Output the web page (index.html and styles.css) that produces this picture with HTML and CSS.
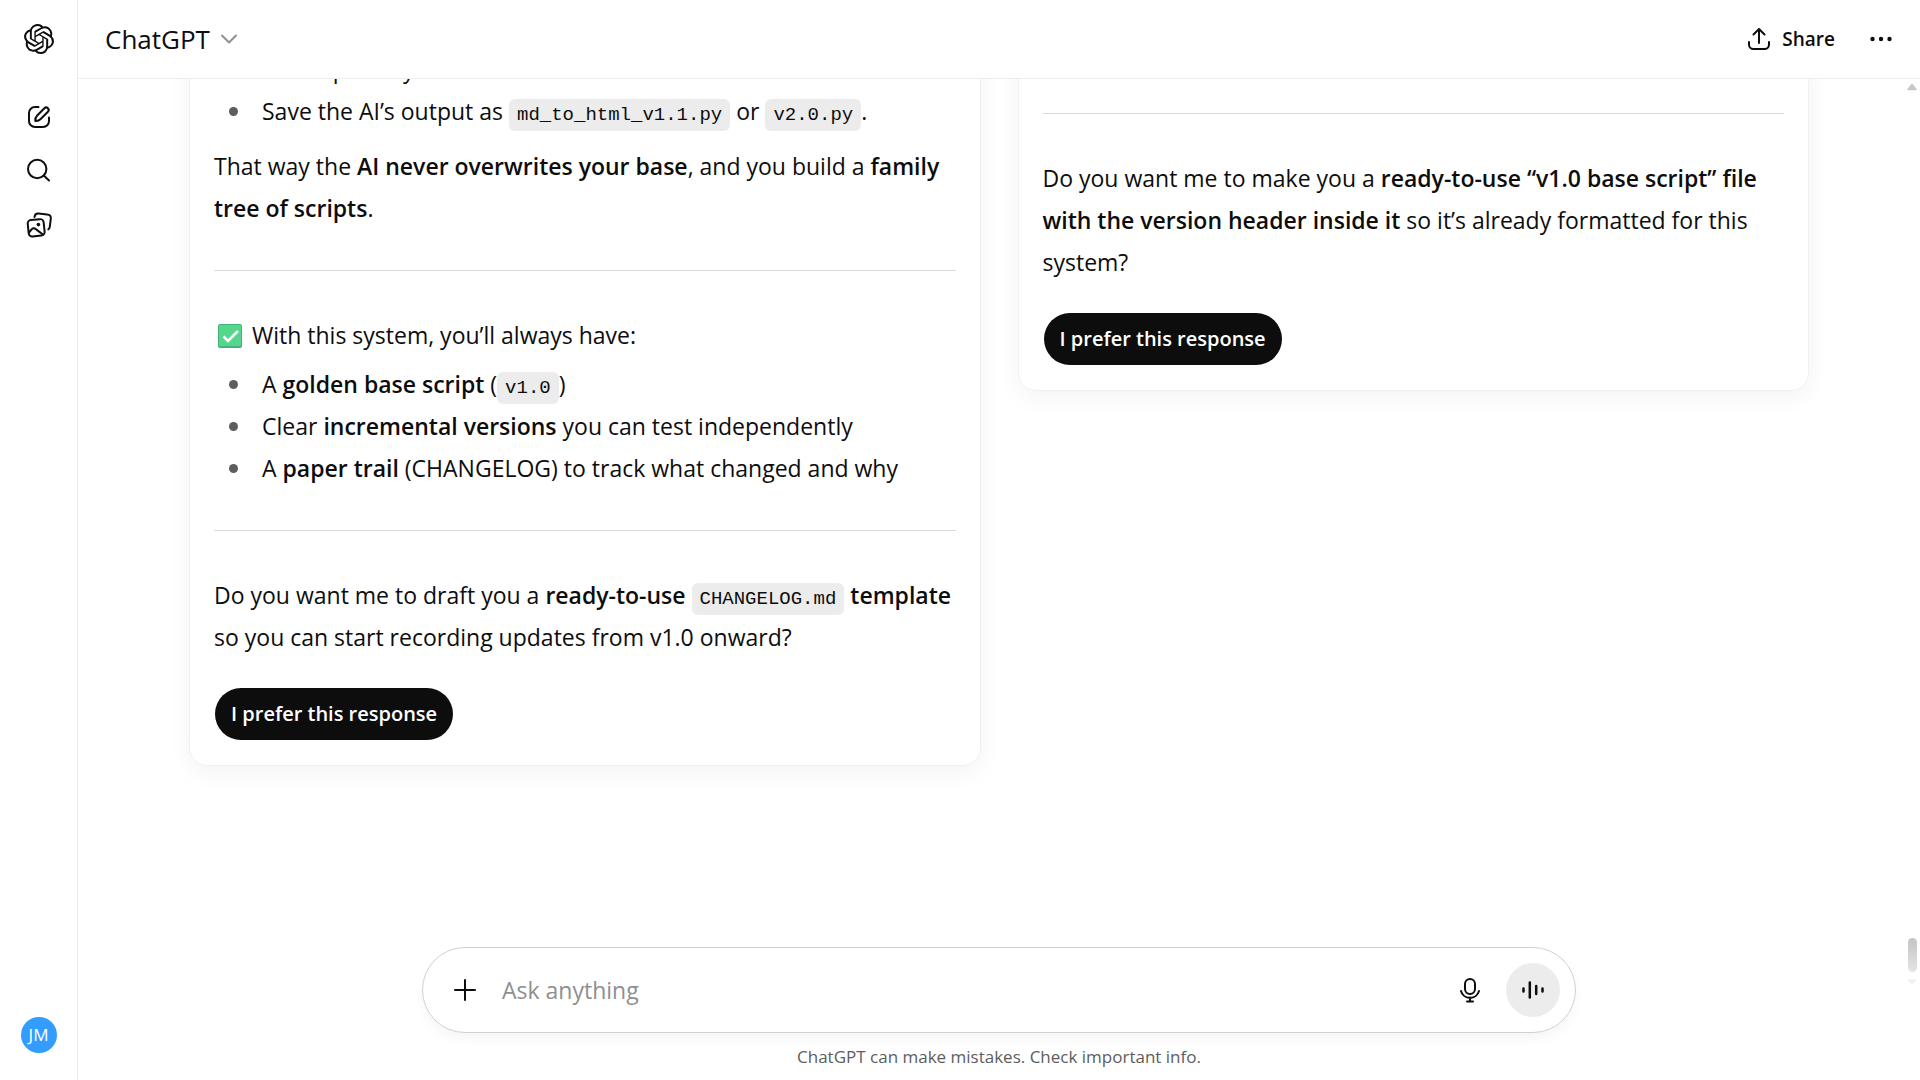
FILE: index.html
```html
<!DOCTYPE html>
<html lang="en">
<head>
<meta charset="utf-8">
<title>ChatGPT</title>
<meta name="viewport" content="width=device-width, initial-scale=1">
<link rel="stylesheet" href="styles.css">
</head>
<body>
<div class="app">
  <nav class="rail" aria-label="Sidebar">
    <a class="rail-logo" href="#" aria-label="Home">
      <svg width="30" height="30" viewBox="0 0 24 24" fill="currentColor"><path d="M22.2819 9.8211a5.9847 5.9847 0 0 0-.5157-4.9108 6.0462 6.0462 0 0 0-6.5098-2.9A6.0651 6.0651 0 0 0 4.9807 4.1818a5.9847 5.9847 0 0 0-3.9977 2.9 6.0462 6.0462 0 0 0 .7427 7.0966 5.98 5.98 0 0 0 .511 4.9107 6.051 6.051 0 0 0 6.5146 2.9001A5.9847 5.9847 0 0 0 13.2599 24a6.0557 6.0557 0 0 0 5.7718-4.2058 5.9894 5.9894 0 0 0 3.9977-2.9001 6.0557 6.0557 0 0 0-.7475-7.0729zm-9.022 12.6081a4.4755 4.4755 0 0 1-2.8764-1.0408l.1419-.0804 4.7783-2.7582a.7948.7948 0 0 0 .3927-.6813v-6.7369l2.02 1.1686a.071.071 0 0 1 .038.052v5.5826a4.504 4.504 0 0 1-4.4945 4.4944zm-9.6607-4.1254a4.4708 4.4708 0 0 1-.5346-3.0137l.142.0852 4.783 2.7582a.7712.7712 0 0 0 .7806 0l5.8428-3.3685v2.3324a.0804.0804 0 0 1-.0332.0615L9.74 19.9502a4.4992 4.4992 0 0 1-6.1408-1.6464zM2.3408 7.8956a4.485 4.485 0 0 1 2.3655-1.9728V11.6a.7664.7664 0 0 0 .3879.6765l5.8144 3.3543-2.0201 1.1685a.0757.0757 0 0 1-.071 0l-4.8303-2.7865A4.504 4.504 0 0 1 2.3408 7.872zm16.5963 3.8558L13.1038 8.364 15.1192 7.2a.0757.0757 0 0 1 .071 0l4.8303 2.7913a4.4944 4.4944 0 0 1-.6765 8.1042v-5.6772a.79.79 0 0 0-.407-.667zm2.0107-3.0231l-.142-.0852-4.7735-2.7818a.7759.7759 0 0 0-.7854 0L9.409 9.2297V6.8974a.0662.0662 0 0 1 .0284-.0615l4.8303-2.7866a4.4992 4.4992 0 0 1 6.6802 4.66zM8.3065 12.863l-2.02-1.1638a.0804.0804 0 0 1-.038-.0567V6.0742a4.4992 4.4992 0 0 1 7.3757-3.4537l-.142.0805L8.704 5.459a.7948.7948 0 0 0-.3927.6813zm1.0976-2.3654l2.602-1.4998 2.6069 1.4998v2.9994l-2.5974 1.4997-2.6067-1.4997Z"/></svg>
    </a>
    <div class="rail-actions">
      <button class="icon-button" aria-label="New chat">
        <svg class="line" width="30" height="30" viewBox="0 0 30 30"><path d="M14.5 5H11a6 6 0 0 0-6 6v8a6 6 0 0 0 6 6h8a6 6 0 0 0 6-6v-3.500"/><path d="M11.300 18.900c-.2-2.400.5-4 1.900-5.400l7.200-7.200a2.450 2.450 0 0 1 3.500 3.500l-7.200 7.200c-1.400 1.400-3 2.100-5.400 1.900z"/></svg>
      </button>
      <button class="icon-button" aria-label="Search chats">
        <svg class="line" width="30" height="30" viewBox="0 0 30 30"><circle cx="13.200" cy="13" r="9.200"/><path d="M19.800 19.500l5.200 5"/></svg>
      </button>
      <button class="icon-button" aria-label="Library">
        <svg class="line" width="30" height="30" viewBox="0 0 30 30"><rect x="4.200" y="9.600" width="16" height="16.400" rx="3.500" transform="rotate(-6 12 18)"/><path d="M10.500 7c.3-2.500 1.600-3.600 4-3.400l8.600.8c2.800.2 4 1.700 3.700 4.300l-1 8c-.2 1.600-.7 2.300-1.500 2.700"/><path d="M5 22.500l2.800-3.400c1.200-1.300 2.600-1.300 4 0l6.800 5.200"/><circle class="dot" cx="14.400" cy="14.600" r="1.800"/></svg>
      </button>
    </div>
    <button class="avatar" aria-label="Account">JM</button>
  </nav>

  <main class="main">
    <header class="topbar">
      <button class="model">ChatGPT
        <svg width="18" height="18" viewBox="0 0 18 18"><path d="M2 5.500l7 7 7-7"/></svg>
      </button>
      <div class="topbar-actions">
        <button class="share">
          <svg class="line" width="24" height="24" viewBox="0 0 24 24"><path d="M2 15v2.500a4.500 4.500 0 0 0 4.500 4.500h11a4.500 4.500 0 0 0 4.500-4.500V15"/><path d="M12 16V2.500M6.500 7.500L12 2l5.500 5.500"/></svg>
          Share
        </button>
        <button class="more" aria-label="More options">
          <svg width="24" height="24" viewBox="0 0 24 24" fill="currentColor"><circle cx="3.500" cy="12" r="2.200"/><circle cx="12" cy="12" r="2.200"/><circle cx="20.500" cy="12" r="2.200"/></svg>
        </button>
      </div>
    </header>

    <section class="thread">
      <article class="card card-left">
        <ul>
          <li>Back up safely</li>
          <li>Save the AI’s output as <code>md_to_html_v1.1.py</code> or <code>v2.0.py</code>.</li>
        </ul>
        <p>That way the <strong>AI never overwrites your base</strong>, and you build a <strong>family tree of scripts</strong>.</p>
        <hr>
        <p class="lead"><svg class="check" width="32" height="24" viewBox="0 0 32 24" role="img" aria-label="Done"><rect x="4" width="24" height="24" rx="2" fill="#3fb57c"/><rect x="5" y="1" width="22" height="21" rx="1" fill="#56d68d"/><path d="M9.500 12.500l4.500 4.500 10-10" fill="none" stroke="#fff" stroke-width="2.600"/></svg> With this system, you’ll always have:</p>
        <ul>
          <li>A <strong>golden base script</strong> (<code>v1.0</code>)</li>
          <li>Clear <strong>incremental versions</strong> you can test independently</li>
          <li>A <strong>paper trail</strong> (CHANGELOG) to track what changed and why</li>
        </ul>
        <hr>
        <p>Do you want me to draft you a <strong>ready-to-use <code>CHANGELOG.md</code> template</strong> so you can start recording updates from v1.0 onward?</p>
        <button class="prefer">I prefer this response</button>
      </article>
      <article class="card card-right">
        <hr>
        <p>Do you want me to make you a <strong>ready-to-use “v1.0 base script” file with the version header inside it</strong> so it’s already formatted for this system?</p>
        <button class="prefer">I prefer this response</button>
      </article>
    </section>

    <footer class="footer">
      <form class="composer">
        <button type="button" class="icon-button" aria-label="Add files">
          <svg class="line" width="30" height="30" viewBox="0 0 30 30"><path d="M15 5v20M5 15h20"/></svg>
        </button>
        <input type="text" aria-label="Message" placeholder="Ask anything">
        <button type="button" class="icon-button" aria-label="Dictate">
          <svg class="line" width="30" height="30" viewBox="0 0 30 30"><rect x="11" y="4" width="10" height="15" rx="5"/><path d="M7 16a9.300 9.300 0 0 0 18 0M16 22.500v4M13 26.500h6"/></svg>
        </button>
        <button type="button" class="voice" aria-label="Voice mode">
          <svg class="bars" width="26" height="26" viewBox="0 0 26 26"><path d="M3.500 11.500v3M9.800 5.500v15M16.200 9v8M22.500 11.500v3"/></svg>
        </button>
      </form>
      <p class="notice">ChatGPT can make mistakes. Check important info.</p>
    </footer>

    <div class="scrollbar" aria-hidden="true">
      <svg width="10" height="8" viewBox="0 0 10 8"><path d="M5 1.500L9 6.500H1z" fill="#c8c8c8" stroke="#c8c8c8" stroke-width="1.500" stroke-linejoin="round"/></svg>
      <span class="thumb"></span>
      <svg width="10" height="8" viewBox="0 0 10 8"><path d="M0 1h10L5 7z" fill="#f3f3f3"/></svg>
    </div>
  </main>
</div>
</body>
</html>
```
FILE: styles.css
```css
* { box-sizing: border-box; }

body {
  margin: 0;
  background: #fff;
  color: #0d0d0d;
  font-family: "Open Sans", "Noto Sans", sans-serif;
  font-size: 23px;
  line-height: 42px;
}

button {
  border: 0;
  padding: 0;
  background: none;
  color: inherit;
  font: inherit;
  display: flex;
  align-items: center;
  justify-content: center;
}

svg { flex: none; }

.line {
  fill: none;
  stroke: currentColor;
  stroke-width: 2;
  stroke-linecap: round;
  stroke-linejoin: round;
}

.line .dot { fill: currentColor; stroke: none; }

.app {
  display: flex;
  height: 100vh;
}

.rail {
  display: flex;
  flex-direction: column;
  align-items: center;
  flex: none;
  width: 78px;
  padding: 24px 0 27px;
  border-right: 1px solid #ededed;
}

.rail-logo {
  display: flex;
  color: inherit;
}

.rail-actions {
  display: flex;
  flex-direction: column;
  gap: 24px;
  margin-top: 48px;
}

.icon-button { width: 30px; height: 30px; flex: none; }

.avatar {
  width: 36px;
  height: 36px;
  margin-top: auto;
  border-radius: 50%;
  background: #339cff;
  color: #fff;
  font-size: 17px;
}

.main {
  position: relative;
  display: flex;
  flex-direction: column;
  flex: 1;
  min-width: 0;
}

.topbar {
  display: flex;
  align-items: center;
  justify-content: space-between;
  flex: none;
  height: 79px;
  padding: 0 27px;
  border-bottom: 1px solid #ededed;
}

.model {
  gap: 10px;
  font-size: 26px;
}

.model path {
  fill: none;
  stroke: #8f8f8f;
  stroke-width: 2;
  stroke-linecap: round;
  stroke-linejoin: round;
}

.topbar-actions {
  display: flex;
  align-items: center;
  gap: 34px;
}

.share {
  gap: 11px;
  font-size: 19px;
  font-weight: 600;
}

.thread {
  display: flex;
  align-items: flex-start;
  gap: 37px;
  flex: 1;
  min-height: 0;
  padding: 0 111px;
  overflow: hidden;
}

.card {
  flex: 1;
  min-width: 0;
  padding: 24px 24px 25px;
  border: 1px solid #f0f0f0;
  border-radius: 18px;
  box-shadow: 0 6px 24px rgba(0, 0, 0, 0.05);
}

/* The thread is scrolled, so the start of each answer is above the fold. */
.card-left { margin-top: -56px; }
.card-right { margin-top: -32px; }

.card p { margin: 0; }
.card .lead { margin-bottom: 7px; }

.card ul {
  margin: 0;
  padding-left: 48px;
  list-style: none;
}

.card li { position: relative; }

.card li::before {
  content: "";
  position: absolute;
  top: 17px;
  left: -33px;
  width: 9px;
  height: 9px;
  border-radius: 50%;
  background: #5d5d5d;
}

.card ul + p { margin-top: 13px; }

.card hr {
  margin: 41px 0 43px;
  border: 0;
  border-top: 1px solid #d9d9d9;
}

.card strong { font-weight: 600; }

.card code {
  padding: 5px 8px;
  border-radius: 6px;
  background: #ececec;
  font-family: "Liberation Mono", monospace;
  font-size: 19px;
  font-weight: 400;
  line-height: 24px;
}

.check { vertical-align: -4px; }

.prefer {
  height: 52px;
  margin-top: 30px;
  margin-left: 1px;
  padding: 0 16px;
  border-radius: 26px;
  background: #0d0d0d;
  color: #fff;
  font-size: 20px;
  font-weight: 600;
}

.footer {
  display: flex;
  flex-direction: column;
  align-items: center;
  flex: none;
  padding: 0 24px 10px;
}

.composer {
  display: flex;
  align-items: center;
  gap: 22px;
  width: 100%;
  max-width: 1154px;
  height: 86px;
  padding: 0 15px 0 27px;
  border: 1px solid #d0d0d0;
  border-radius: 43px;
  box-shadow: 0 6px 12px rgba(0, 0, 0, 0.04);
}

.composer input {
  flex: 1;
  min-width: 0;
  padding: 0;
  border: 0;
  outline: 0;
  background: none;
  color: inherit;
  font: inherit;
}

.composer input::placeholder { color: #8f8f8f; opacity: 1; }

.voice {
  width: 54px;
  height: 54px;
  border-radius: 50%;
  background: #ececec;
}

.bars {
  fill: none;
  stroke: currentColor;
  stroke-width: 2.5;
  stroke-linecap: round;
}

.notice {
  margin: 11px 0 0;
  color: #5d5d5d;
  font-size: 17px;
  line-height: 26px;
}

.scrollbar {
  position: absolute;
  top: 83px;
  right: 3px;
  bottom: 94px;
  display: flex;
  flex-direction: column;
  align-items: center;
  gap: 6px;
  width: 10px;
}

.thumb {
  width: 9px;
  height: 34px;
  margin-top: auto;
  border-radius: 5px;
  background: linear-gradient(#c4c4c4, #e4e4e4);
}
```
